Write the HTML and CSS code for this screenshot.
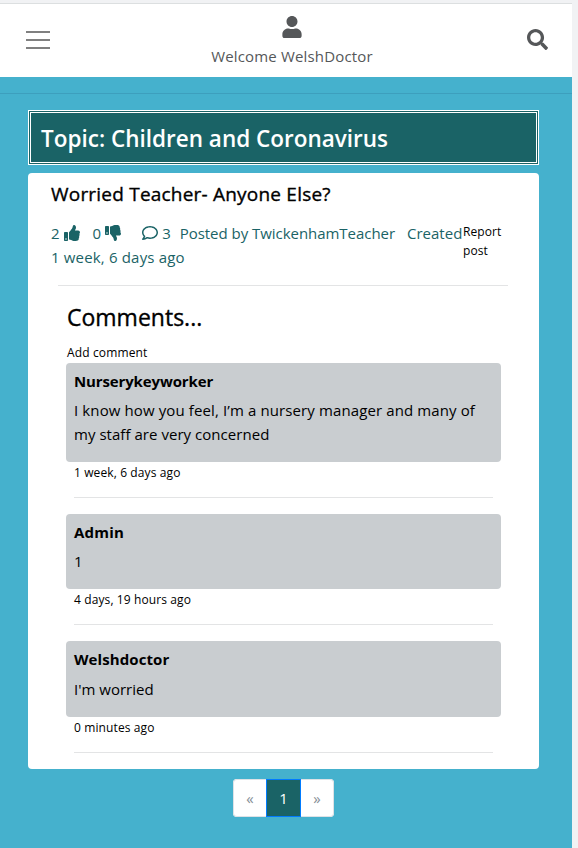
FILE: index.html
```html
<!DOCTYPE html>
<html lang="en">
<head>
<meta charset="utf-8">
<title>Children and Coronavirus</title>
<link rel="stylesheet" href="styles.css">
</head>
<body>
<div class="page">
  <header class="navbar">
    <button class="menu" aria-label="Menu"><span></span><span></span><span></span></button>
    <div class="user">
      <svg class="user-icon" viewBox="0 0 448 512"><path d="M224 256c70.700 0 128-57.300 128-128S294.700 0 224 0 96 57.300 96 128s57.300 128 128 128zm89.600 32h-16.700c-22.200 10.200-46.900 16-72.900 16s-50.600-5.800-72.900-16h-16.700C60.200 288 0 348.200 0 422.400V464c0 26.500 21.500 48 48 48h352c26.500 0 48-21.500 48-48v-41.600c0-74.200-60.200-134.400-134.400-134.400z"/></svg>
      <span class="welcome">Welcome WelshDoctor</span>
    </div>
    <svg class="search-icon" viewBox="0 0 512 512"><path d="M505 442.700L405.300 343c-4.500-4.500-10.600-7-17-7H372c27.600-35.300 44-79.700 44-128C416 93.100 322.900 0 208 0S0 93.100 0 208s93.100 208 208 208c48.300 0 92.700-16.400 128-44v16.300c0 6.400 2.500 12.500 7 17l99.700 99.700c9.400 9.400 24.600 9.400 33.900 0l28.300-28.300c9.400-9.400 9.400-24.600.1-34zM208 336c-70.700 0-128-57.200-128-128 0-70.700 57.200-128 128-128 70.700 0 128 57.200 128 128 0 70.700-57.200 128-128 128z"/></svg>
  </header>
  <hr class="top-rule">
  <main class="content">
    <h1 class="topic"><span>Topic: Children and Coronavirus</span></h1>
    <article class="card">
      <h2 class="title"><span>Worried Teacher- Anyone Else?</span></h2>
      <div class="meta">
        <div class="stats">
          <div class="line">
            <span class="up">2</span>
            <svg class="thumb" viewBox="0 0 512 512"><path d="M104 224H24c-13.300 0-24 10.700-24 24v240c0 13.300 10.700 24 24 24h80c13.300 0 24-10.700 24-24V248c0-13.300-10.700-24-24-24zM64 472c-13.300 0-24-10.700-24-24s10.700-24 24-24 24 10.700 24 24-10.700 24-24 24zM384 81.500c0 42.400-26 66.200-33.300 94.500h101.700c33.400 0 59.400 27.700 59.600 58.100.1 17.900-7.500 37.200-19.400 49.200 9.800 23.300 8.200 55.900-9.300 79.300 8.700 25.900-.1 57.700-16.400 74.800 4.300 17.600 2.200 32.600-6.100 44.600C440.200 511.600 389.600 512 346.800 512H344c-48.300 0-87.800-17.600-119.600-31.700-16-7.100-36.800-15.900-52.700-16.200-6.500-.1-11.800-5.500-11.800-12V238.300c0-3.200 1.300-6.300 3.600-8.500 39.600-39.100 56.600-80.600 89.100-113.100 14.800-14.800 20.200-37.200 25.400-58.900C282.500 39.300 291.800 0 312 0c24 0 72 8 72 81.500z"/></svg>
            <span class="down">0</span>
            <svg class="thumb thumb-down" viewBox="0 0 512 512"><path d="M0 56v240c0 13.300 10.700 24 24 24h80c13.300 0 24-10.700 24-24V56c0-13.300-10.700-24-24-24H24C10.700 32 0 42.700 0 56zm40 200c0-13.300 10.700-24 24-24s24 10.700 24 24-10.700 24-24 24-24-10.700-24-24zm272 256c-20.200 0-29.500-39.300-33.900-57.800-5.200-21.700-10.600-44.100-25.400-58.900-32.500-32.500-49.500-74-89.100-113.100a12 12 0 0 1-3.600-8.500V59.900c0-6.500 5.200-11.900 11.800-12 15.800-.3 36.700-9.100 52.700-16.200C256.200 17.600 295.700 0 344 0h2.800c42.800 0 93.400.4 113.800 29.700 8.400 12.100 10.400 27 6.100 44.600 16.300 17.100 25.100 48.900 16.400 74.800 17.500 23.400 19.100 56.100 9.300 79.300 11.900 12 19.500 31.300 19.400 49.200-.2 30.400-26.200 58.100-59.600 58.100H350.700C358 364.300 384 388.100 384 430.500 384 504 336 512 312 512z"/></svg>
            <svg class="bubble" viewBox="0 0 512 512"><path d="M256 32C114.600 32 0 125.100 0 240c0 47.600 19.900 91.200 52.900 126.300C38 405.700 7 439.100 6.500 439.500c-6.600 7-8.400 17.200-4.600 26S14.400 480 24 480c61.500 0 110-25.700 139.100-46.300C192 442.800 223.200 448 256 448c141.400 0 256-93.100 256-208S397.400 32 256 32zm0 368c-26.700 0-53.100-4.100-78.400-12.100l-22.700-7.200-19.500 13.800c-14.300 10.100-33.900 21.400-57.500 29 7.300-12.100 14.400-25.700 19.900-40.200l10.600-28.100-20.600-21.800C69.700 314.100 48 282.200 48 240c0-88.200 93.300-160 208-160s208 71.800 208 160-93.300 160-208 160z"/></svg>
            <span class="replies">3</span>
            <span class="author">Posted by TwickenhamTeacher</span>
            <span class="created">Created</span>
          </div>
          <div class="line"><span class="age">1 week, 6 days ago</span></div>
        </div>
        <a class="report">Report<br>post</a>
      </div>
      <hr class="card-rule">
      <section class="comments">
        <h3 class="comments-title"><span>Comments...</span></h3>
        <a class="add">Add comment</a>
        <div class="comment">
          <div class="bubble-box first"><strong class="n1">Nurserykeyworker</strong><p><span class="b1">I know how you feel, I’m a nursery manager and many of</span><br><span class="b2">my staff are very concerned</span></p></div>
          <small>1 week, 6 days ago</small>
          <hr>
        </div>
        <div class="comment">
          <div class="bubble-box second"><strong class="n2">Admin</strong><p>1</p></div>
          <small>4 days, 19 hours ago</small>
          <hr>
        </div>
        <div class="comment">
          <div class="bubble-box third"><strong class="n3">Welshdoctor</strong><p>I'm worried</p></div>
          <small>0 minutes ago</small>
          <hr>
        </div>
      </section>
    </article>
    <nav class="pagination"><a class="prev">«</a><a class="current">1</a><a class="next">»</a></nav>
  </main>
</div>
</body>
</html>
```
FILE: styles.css
```css
* { box-sizing: border-box; }
body {
  margin: 0;
  height: 848px;
  overflow: hidden;
  background: #f1f2f4;
  font-family: "Open Sans", "Noto Sans", sans-serif;
  font-size: 15px;
  line-height: 24px;
  color: #000;
}
h1, h2, h3, p { margin: 0; }
hr { margin: 0; border: 0; height: 1px; background: #e3e4e5; }
svg { fill: currentColor; flex: none; display: block; }
span, small, strong, a { white-space: nowrap; }
.page {
  width: 572px;
  height: 845px;
  margin-top: 3px;
  border-top: 1px solid #dcdfe0;
  background: #45b1cd;
}
.navbar {
  display: flex;
  justify-content: space-between;
  height: 73px;
  padding: 0 24px 0 26px;
  background: #fff;
  color: #555759;
}
.menu {
  display: flex;
  flex-direction: column;
  gap: 6px;
  width: 24px;
  margin: 27px 0 0;
  padding: 0;
  border: 0;
  background: none;
}
.menu span { width: 24px; height: 2px; background: #808080; }
.user { display: flex; flex-direction: column; align-items: center; padding-top: 12px; margin-left: 7px; }
.user-icon { width: 20px; height: 22px; }
.welcome { margin-top: 6px; letter-spacing: .16px; }
.search-icon { width: 21px; height: 21px; margin-top: 25px; }
.top-rule { margin-top: 16px; background: #3d9fbd; }
.content { width: 511px; margin: 16px 0 0 28px; }
.topic {
  height: 55px;
  padding: 11px 10px 0;
  border: 3px double #fff;
  background: #1a6366;
  color: #fff;
  font-size: 22.5px;
  font-weight: 600;
  line-height: 30px;
}
.card { height: 596px; margin-top: 8px; padding: 9px 31px 0 23px; border-radius: 4px; background: #fff; }
.title { font-size: 19px; font-weight: 500; line-height: 24px; letter-spacing: .21px; -webkit-text-stroke: .35px #000; }
.meta { display: flex; height: 63px; margin-top: 15px; color: #1a6366; }
.stats { width: 412px; }
.line { display: flex; height: 24px; }
.thumb { width: 16px; height: 16px; margin: 4px 0 0 4px; }
.down { margin-left: 13px; }
.bubble { width: 16px; height: 16px; margin: 4px 0 0 21px; }
.replies { margin-left: 4px; }
.author { margin-left: 9px; letter-spacing: -.04px; }
.created { margin-left: 12px; }
.age { letter-spacing: .17px; }
.report { padding-top: 1px; color: #000; font-size: 12px; line-height: 19px; letter-spacing: .1px; }
.card-rule { margin: 1px 0 0 7px; }
.comments { margin-left: 15px; width: 435px; }
.comments-title { margin-top: 16px; padding-left: 1px; font-size: 23px; font-weight: 500; line-height: 30px; -webkit-text-stroke: .35px #000; }
.add { display: block; margin-top: 11px; padding-left: 1px; font-size: 12px; line-height: 20px; letter-spacing: .14px; }
.bubble-box { padding: 6px 8px 0; border-radius: 4px; background: #c9cdd0; }
.bubble-box strong { display: block; font-weight: 700; }
.bubble-box p { margin-top: 5px; }
.n1 { letter-spacing: -.13px; }
.n2 { letter-spacing: .2px; }
.n3 { letter-spacing: .09px; }
.b1 { letter-spacing: .115px; }
.b2 { letter-spacing: .04px; }
.first { height: 99px; }
.second { height: 75px; }
.third { height: 76px; }
.third p { margin-top: 6px; }
.comment small { display: block; height: 35px; padding: 1px 0 0 8px; font-size: 12px; line-height: 20px; letter-spacing: .11px; }
.comment hr { margin: 0 8px 16px; }
.pagination { display: flex; width: 101px; height: 38px; margin: 10px 0 0 205px; border-radius: 4px; background: #fff; }
.pagination a { display: flex; align-items: center; justify-content: center; width: 33px; border: 1px solid #dee2e6; color: #868e96; }
.pagination .prev { border-right: 0; border-radius: 4px 0 0 4px; }
.pagination .next { border-left: 0; border-radius: 0 4px 4px 0; }
.pagination .current { width: 35px; border-color: #007bff; background: #1a6366; color: #fff; }
```
